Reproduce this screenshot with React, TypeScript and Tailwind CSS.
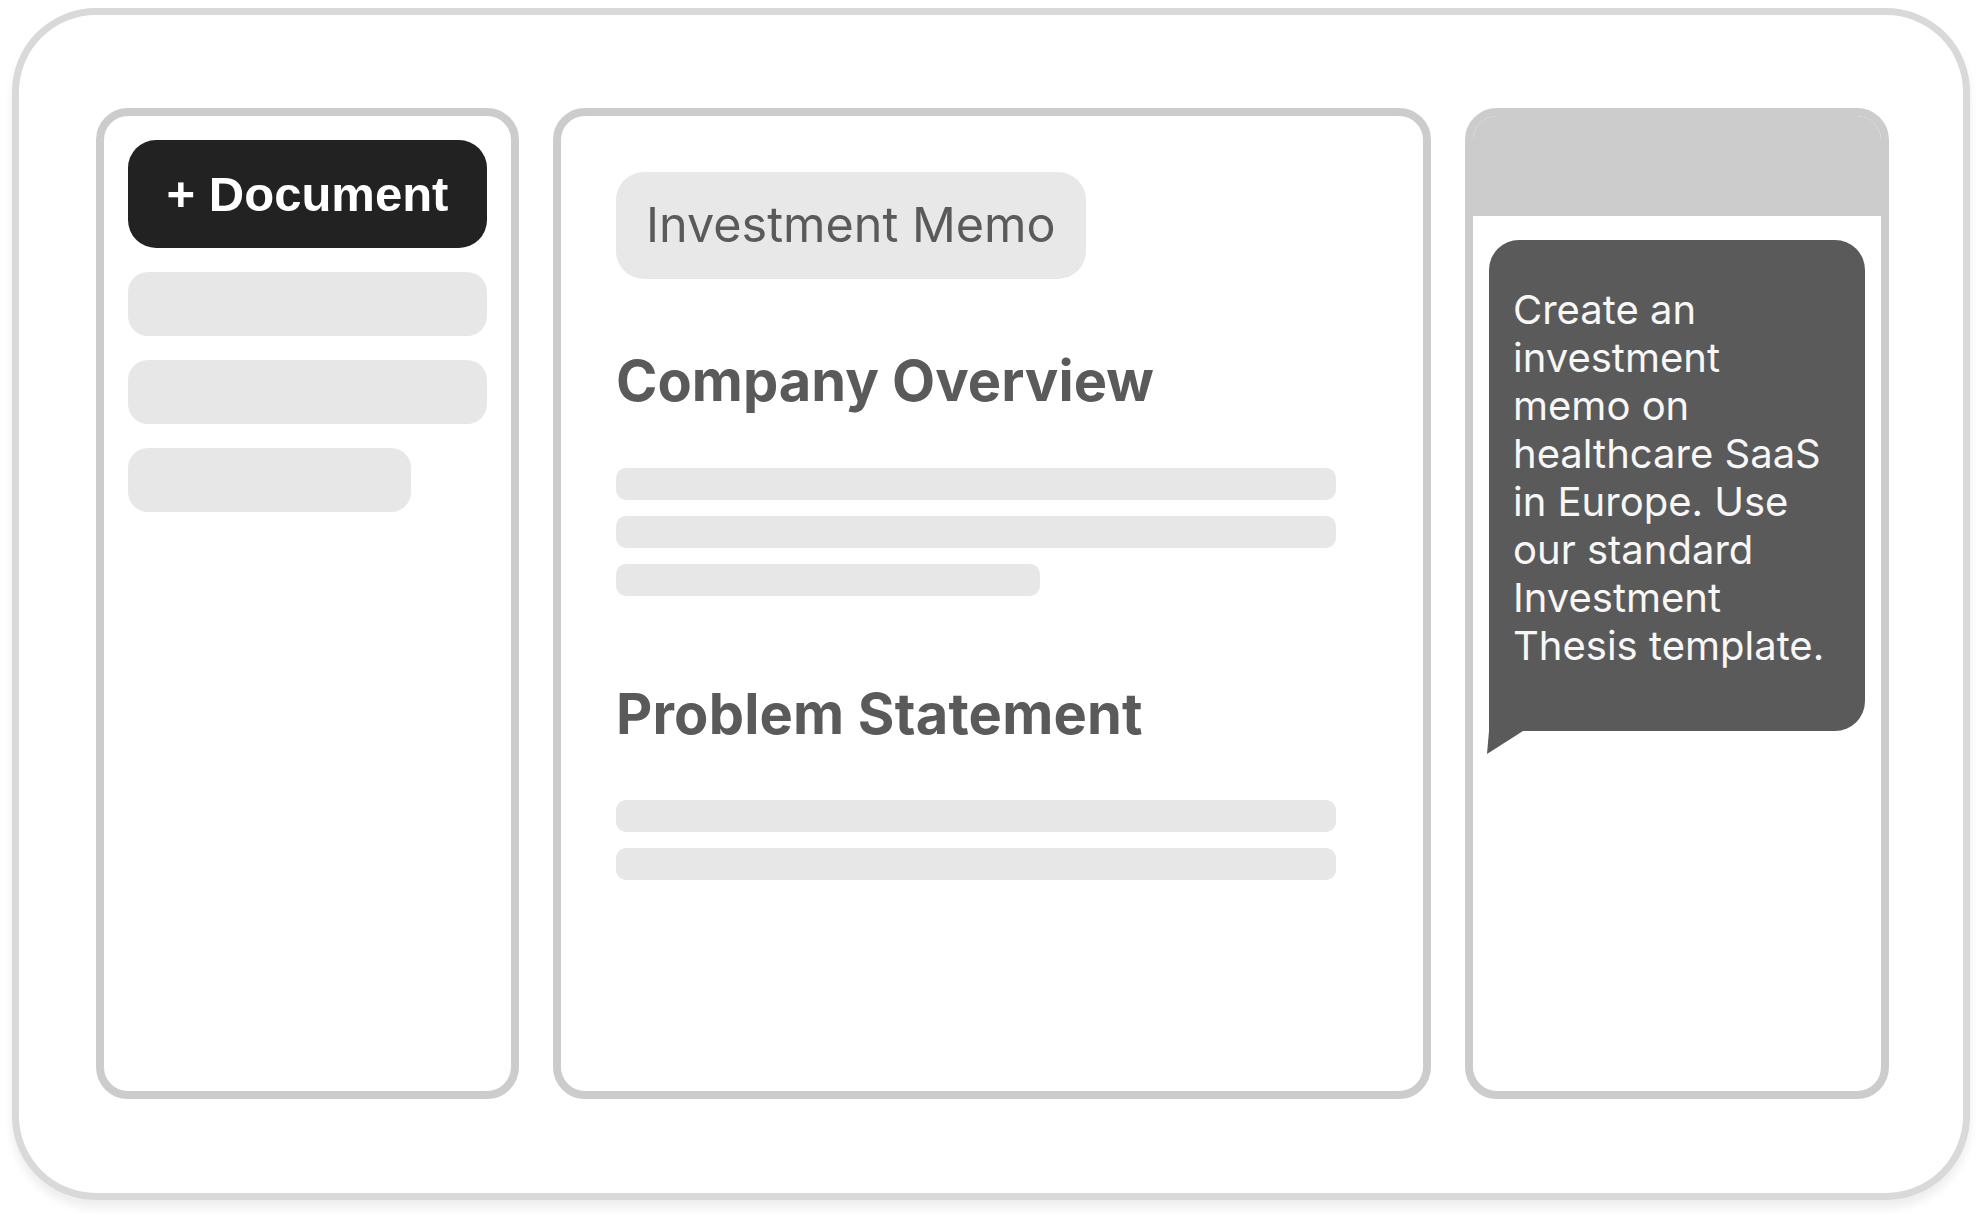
import React from "react";

const chatLines = [
  "Create an",
  "investment",
  "memo on",
  "healthcare SaaS",
  "in Europe. Use",
  "our standard",
  "Investment",
  "Thesis template.",
];

function LeftPanel() {
  return (
    <div className="w-[423px] h-[991px] shrink-0 rounded-[32px] border-[8px] border-[#cccccc] bg-white p-[24px] flex flex-col gap-[24px]">
      <div className="h-[108px] w-full rounded-[28px] bg-[#222222] flex items-center justify-center text-white font-bold text-[49px] leading-none [font-family:'Liberation_Sans',Arial,sans-serif]">
        + Document
      </div>
      <div className="h-[64px] w-full rounded-[20px] bg-[#e7e7e7]" />
      <div className="h-[64px] w-full rounded-[20px] bg-[#e7e7e7]" />
      <div className="h-[64px] w-[283px] rounded-[20px] bg-[#e7e7e7]" />
    </div>
  );
}

function MiddlePanel() {
  return (
    <div className="w-[878px] h-[991px] shrink-0 rounded-[32px] border-[8px] border-[#cccccc] bg-white pl-[55px] pt-[56px] flex flex-col items-start">
      <div className="h-[107px] rounded-[28px] bg-[#e8e8e8] px-[30px] flex items-center text-[#5a5a5a] text-[48.5px] leading-none [font-family:Inter,sans-serif]">
        Investment Memo
      </div>
      <h2 className="mt-[74px] text-[56px] leading-none font-bold text-[#5a5a5a] [font-family:Inter,sans-serif]">
        Company Overview
      </h2>
      <div className="mt-[59px] flex flex-col gap-[16px]">
        <div className="h-[32px] w-[720px] rounded-[10px] bg-[#e7e7e7]" />
        <div className="h-[32px] w-[720px] rounded-[10px] bg-[#e7e7e7]" />
        <div className="h-[32px] w-[424px] rounded-[10px] bg-[#e7e7e7]" />
      </div>
      <h2 className="mt-[90px] text-[56px] leading-none font-bold text-[#5a5a5a] [font-family:Inter,sans-serif] tracking-[0.2px]">
        Problem Statement
      </h2>
      <div className="mt-[58px] flex flex-col gap-[16px]">
        <div className="h-[32px] w-[720px] rounded-[10px] bg-[#e7e7e7]" />
        <div className="h-[32px] w-[720px] rounded-[10px] bg-[#e7e7e7]" />
      </div>
    </div>
  );
}

function RightPanel() {
  return (
    <div className="w-[424px] h-[991px] shrink-0 rounded-[32px] border-[8px] border-[#cccccc] bg-white overflow-hidden flex flex-col">
      <div className="h-[100px] w-full bg-[#cccccc]" />
      <div className="px-[16px] pt-[24px]">
        <div className="relative rounded-[30px] rounded-bl-none bg-[#5a5a5a] pl-[24px] pr-[16px] pt-[46px] pb-[61px] text-[#f7f7f7] text-[40px] leading-[48px] [font-family:Inter,sans-serif]">
          {chatLines.map((l) => (
            <div key={l} className="whitespace-nowrap">
              {l}
            </div>
          ))}
          <svg
            className="absolute left-[-2px] top-full"
            width="36"
            height="23"
            viewBox="0 0 36 23"
          >
            <polygon points="2,0 0,23 36,0" fill="#5a5a5a" />
          </svg>
        </div>
      </div>
    </div>
  );
}

export default function App() {
  return (
    <div className="w-[1984px] h-[1216px] bg-white pt-[8px] pl-[12px]">
      <div className="w-[1958px] h-[1192px] rounded-[84px] border-[7px] border-[#d9d9d9] bg-white shadow-[0_8px_10px_rgba(0,0,0,0.07)] pl-[77px] pt-[93px] flex gap-[34px]">
        <LeftPanel />
        <MiddlePanel />
        <RightPanel />
      </div>
    </div>
  );
}
